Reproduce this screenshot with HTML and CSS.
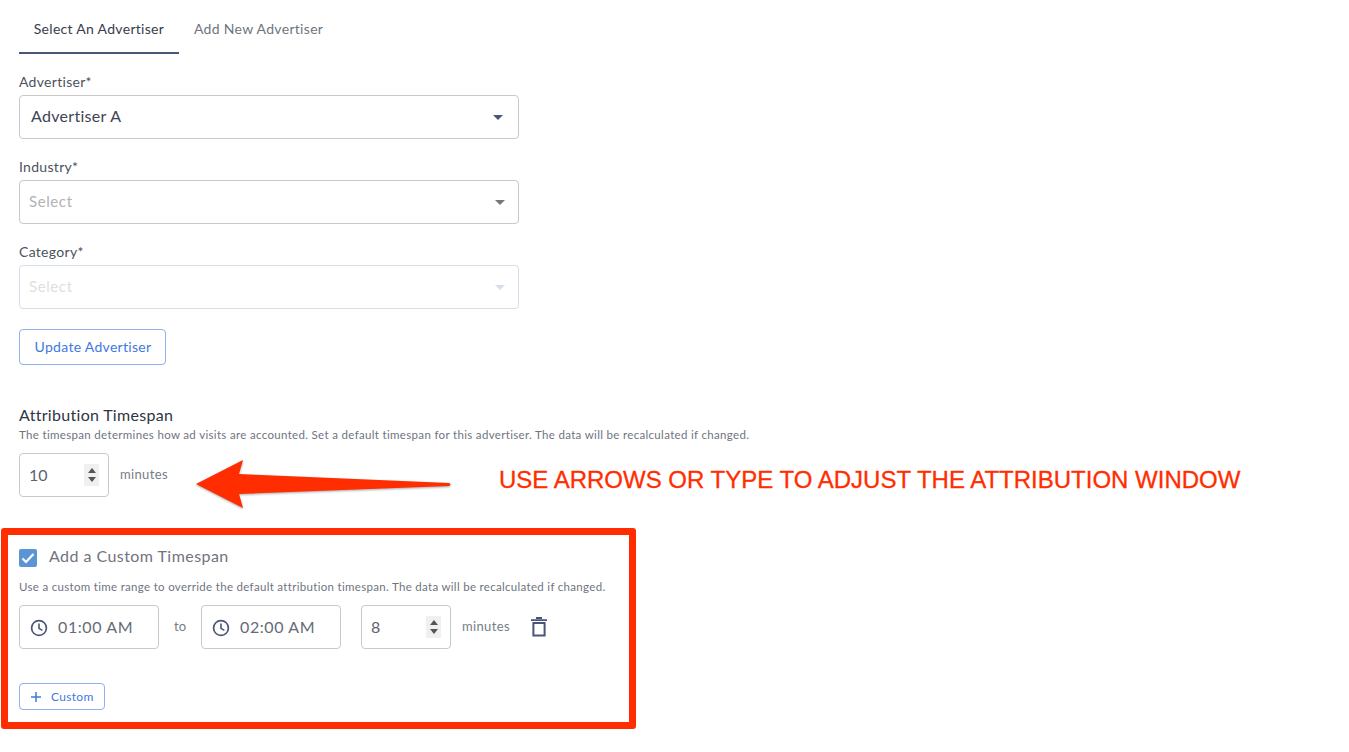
FILE: index.html
```html
<!DOCTYPE html>
<html lang="en">
<head>
    <meta charset="UTF-8">
    <title>Advertiser Settings</title>
    <link rel="stylesheet" href="styles.css">
</head>
<body>
    <main class="page">
        <nav class="tabs">
            <a class="tab active">Select An Advertiser</a>
            <a class="tab">Add New Advertiser</a>
        </nav>

        <div class="field">
            <label>Advertiser*</label>
            <div class="select">
                <span class="select-value">Advertiser A</span>
                <span class="caret dark"></span>
            </div>
        </div>
        <div class="field">
            <label>Industry*</label>
            <div class="select">
                <span class="placeholder">Select</span>
                <span class="caret"></span>
            </div>
        </div>
        <div class="field">
            <label>Category*</label>
            <div class="select disabled">
                <span class="placeholder">Select</span>
                <span class="caret"></span>
            </div>
        </div>

        <button class="btn btn-update">Update Advertiser</button>

        <section class="timespan">
            <h3>Attribution Timespan</h3>
            <p class="hint">The timespan determines how ad visits are accounted. Set a default timespan for this advertiser. The data will be recalculated if changed.</p>
            <div class="row">
                <div class="number">
                    <span class="value">10</span>
                    <span class="spinner"><i class="up"></i><i class="down"></i></span>
                </div>
                <span class="unit">minutes</span>
            </div>
        </section>

        <section class="custom">
            <div class="check-row">
                <span class="checkbox">
                    <svg width="14" height="12" viewBox="0 0 14 12"><path d="M1.5 6.5 5 10l7.5-8" fill="none" stroke="#fff" stroke-width="2.2"/></svg>
                </span>
                <span class="check-label">Add a Custom Timespan</span>
            </div>
            <p class="hint">Use a custom time range to override the default attribution timespan. The data will be recalculated if changed.</p>
            <div class="row">
                <div class="time">
                    <svg class="clock" width="18" height="18" viewBox="0 0 18 18"><circle cx="9" cy="9" r="7.4" fill="none" stroke="#4a5578" stroke-width="1.7"/><path d="M9 4.6V9.4l3.4 2" fill="none" stroke="#4a5578" stroke-width="1.6"/></svg>
                    <span class="value">01:00 AM</span>
                </div>
                <span class="to">to</span>
                <div class="time">
                    <svg class="clock" width="18" height="18" viewBox="0 0 18 18"><circle cx="9" cy="9" r="7.4" fill="none" stroke="#4a5578" stroke-width="1.7"/><path d="M9 4.6V9.4l3.4 2" fill="none" stroke="#4a5578" stroke-width="1.6"/></svg>
                    <span class="value">02:00 AM</span>
                </div>
                <div class="number number-custom">
                    <span class="value">8</span>
                    <span class="spinner"><i class="up"></i><i class="down"></i></span>
                </div>
                <span class="unit">minutes</span>
                <svg class="trash" width="16" height="20" viewBox="0 0 16 20"><path d="M5 1h6M0 3.2h16" stroke="#4a5578" stroke-width="1.8" fill="none"/><path d="M2.4 6h11.2v12.6H2.4z" stroke="#4a5578" stroke-width="2" fill="none"/></svg>
            </div>
            <button class="btn btn-small">
                <svg width="12" height="12" viewBox="0 0 12 12"><path d="M6 1v10M1 6h10" stroke="#3f78e0" stroke-width="1.5"/></svg>
                Custom
            </button>
        </section>
    </main>

    <!-- annotations on top of the screenshot -->
    <svg class="arrow" width="270" height="64" viewBox="0 0 270 64">
        <path d="M6 29 53 5 49 19 259 28Q262 29.500 259 31L49 39 53 53Z" fill="#ff2d00"/>
    </svg>
    <div class="note">USE ARROWS OR TYPE TO ADJUST THE ATTRIBUTION WINDOW</div>
    <div class="redbox"></div>
</body>
</html>
```

FILE: styles.css
```css
body {
    font-family: 'Lato', 'Noto Sans', sans-serif;
    background-color: #fff;
    color: #4a4f5c;
    margin: 0;
    padding: 0;
}

.page {
    padding: 0 19px;
    height: 752px;
    box-sizing: border-box;
    overflow: hidden;
}

.tabs {
    display: flex;
    height: 54px;
    padding-top: 5px;
    box-sizing: border-box;
}

.tab {
    width: 160px;
    height: 49px;
    line-height: 47px;
    box-sizing: border-box;
    text-align: center;
    font-size: 14px;
    letter-spacing: 0.3px;
    color: #6f7480;
}

.tab.active {
    color: #373d4c;
    border-bottom: 2px solid #4a5578;
}

.tab + .tab {
    width: auto;
    padding-left: 15px;
}

.field {
    margin-top: 19px;
    width: 500px;
}

.field label {
    display: block;
    font-size: 14px;
    letter-spacing: 0.3px;
    line-height: 18px;
    height: 22px;
    color: #4c5260;
}

.select {
    height: 44px;
    box-sizing: border-box;
    border: 1px solid #c9c9c9;
    border-radius: 4px;
    display: flex;
    align-items: center;
    justify-content: space-between;
    padding: 0 13px 0 9px;
}

.select-value {
    font-size: 16px;
    letter-spacing: 0.3px;
    color: #3e4452;
    padding: 0 0 3px 2px;
}

.placeholder {
    font-size: 15px;
    letter-spacing: 0.6px;
    color: #b3b3b3;
    padding-bottom: 2px;
}

.caret {
    width: 0;
    height: 0;
    border-left: 5px solid transparent;
    border-right: 5px solid transparent;
    border-top: 5px solid #77777a;
}

.caret.dark {
    border-top-color: #4a5578;
    margin-right: 2px;
}

.select.disabled {
    border-color: #d5dfea;
}

.select.disabled .placeholder {
    color: #dcdfe3;
}

.select.disabled .caret {
    border-top-color: #d5dfea;
}

.btn {
    display: block;
    font-family: inherit;
    background-color: #fff;
    color: #3f78e0;
    border: 1px solid #8fb1ee;
    border-radius: 4px;
    letter-spacing: 0.3px;
    padding: 0;
}

.btn-update {
    margin-top: 20px;
    width: 147px;
    height: 36px;
    font-size: 14px;
    padding: 0 0 2px 1px;
}

.timespan {
    margin-top: 40px;
}

.timespan h3 {
    margin: 0;
    font-size: 16px;
    font-weight: 400;
    letter-spacing: 0.3px;
    line-height: 20px;
    color: #2f3544;
}

.hint {
    margin: 0;
    font-size: 11.5px;
    letter-spacing: 0.33px;
    line-height: 20px;
    color: #6f7480;
}

.custom .hint {
    letter-spacing: 0.31px;
}

.row {
    display: flex;
    align-items: center;
    height: 44px;
    margin-top: 8px;
}

.number {
    width: 90px;
    height: 44px;
    box-sizing: border-box;
    border: 1px solid #c9c9c9;
    border-radius: 4px;
    display: flex;
    align-items: center;
    justify-content: space-between;
    padding: 0 9px 0 9px;
    font-size: 16px;
    color: #5d626e;
}

.value {
    padding-bottom: 2px;
}

.spinner {
    width: 15px;
    height: 22px;
    background-color: #f0f0f0;
    display: flex;
    flex-direction: column;
    align-items: center;
    justify-content: center;
    gap: 4px;
}

.spinner i {
    width: 0;
    height: 0;
    border-left: 4px solid transparent;
    border-right: 4px solid transparent;
}

.spinner .up {
    border-bottom: 5px solid #555;
}

.spinner .down {
    border-top: 5px solid #555;
}

.unit {
    margin-left: 11px;
    font-size: 13px;
    letter-spacing: 0.35px;
    color: #777c87;
    padding-bottom: 2px;
}

.custom {
    margin-top: 51px;
}

.check-row {
    display: flex;
    align-items: center;
    height: 20px;
}

.checkbox {
    width: 18px;
    height: 18px;
    background-color: #5b95d6;
    border-radius: 2px;
    display: flex;
    align-items: center;
    justify-content: center;
}

.check-label {
    margin: 0 0 5px 12px;
    font-size: 16px;
    letter-spacing: 0.45px;
    color: #6f7480;
}

.custom .hint {
    margin-top: 9px;
}

.custom .row {
    margin-top: 8px;
}

.time {
    width: 140px;
    height: 44px;
    box-sizing: border-box;
    border: 1px solid #c9c9c9;
    border-radius: 4px;
    display: flex;
    align-items: center;
    padding-left: 10px;
    font-size: 16px;
    letter-spacing: 0.6px;
    color: #666b76;
}

.clock {
    margin: 1px 10px 0 0;
}

.to {
    width: 42px;
    text-align: center;
    font-size: 13px;
    color: #777c87;
    padding-bottom: 2px;
}

.number-custom {
    margin-left: 20px;
}

.trash {
    margin-left: 21px;
}

.btn-small {
    margin-top: 34px;
    width: 86px;
    height: 27px;
    font-size: 12px;
    display: flex;
    align-items: center;
    gap: 9px;
    padding-left: 10px;
}

.arrow {
    position: absolute;
    left: 190px;
    top: 455px;
    filter: drop-shadow(0 1px 1px rgba(0,0,0,0.35));
}

.note {
    position: absolute;
    left: 499px;
    top: 466px;
    font-family: 'Liberation Sans', Arial, sans-serif;
    font-size: 24px;
    line-height: 28px;
    color: #ff2d00;
    -webkit-text-stroke: 0.3px #ff2d00;
    white-space: nowrap;
}

.redbox {
    position: absolute;
    left: 1px;
    top: 528px;
    width: 635px;
    height: 201px;
    box-sizing: border-box;
    border: 7px solid #ff2d00;
    border-radius: 3px;
}
```
